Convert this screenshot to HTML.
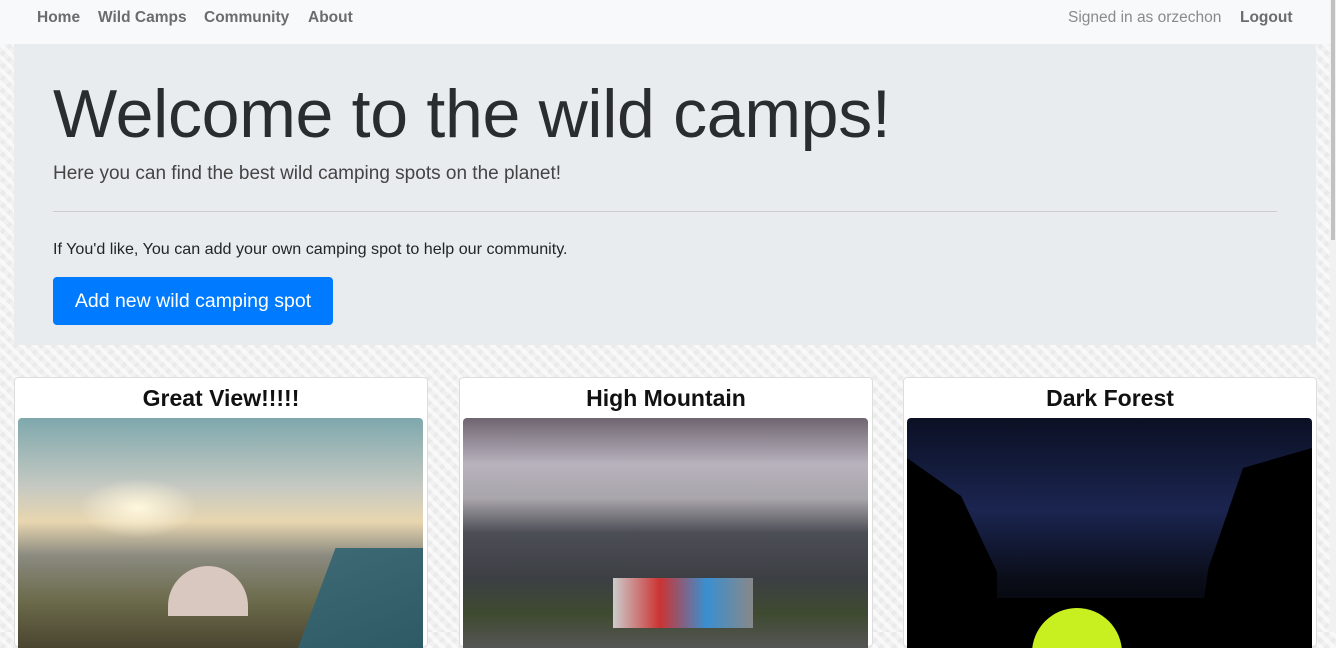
<!DOCTYPE html>
<html><head><style>
*{box-sizing:border-box;margin:0;padding:0}
body{width:1336px;height:632px;overflow:hidden;font-family:"Liberation Sans",sans-serif;background:#f1f1f1;
background-image:repeating-linear-gradient(45deg,rgba(255,255,255,.6) 0 4px,transparent 4px 9px),repeating-linear-gradient(-45deg,rgba(230,230,230,.6) 0 4px,transparent 4px 9px);position:relative}
.nav{position:absolute;left:0;top:0;width:1330px;height:44px;background:#f8f9fa}
.nav a{position:absolute;top:9px;font-size:15.5px;font-weight:bold;color:#6c6c6c;text-decoration:none}
.nav span{position:absolute;top:9px;font-size:15.5px;color:#8a8a8a}
.sb{position:absolute;right:0;top:0;width:6px;height:632px;background:#f1f1f1}
.sb div{position:absolute;left:1px;top:0;width:4px;height:240px;background:#c1c1c1}
.jumbo{position:absolute;left:14px;top:44px;width:1302px;height:301px;background:#e9ecef}
h1{position:absolute;left:39px;top:31px;font-size:68px;font-weight:normal;color:#2a2d30;letter-spacing:-0.3px}
.lead{position:absolute;left:39px;top:119px;font-size:19px;color:#444}
hr{position:absolute;left:39px;top:167px;width:1224px;border:0;border-top:1px solid #ccc}
.p{position:absolute;left:39px;top:196px;font-size:16.1px;color:#212529}
.btn{position:absolute;left:39px;top:233px;width:280px;height:48px;background:#007bff;color:#fff;border-radius:4px;font-size:19.5px;line-height:48px;text-align:center}
.card{position:absolute;top:377px;width:414px;height:270px;background:#fff;border:1px solid #ddd;border-radius:4px}
.card h3{text-align:center;font-size:23px;font-weight:bold;color:#111;margin-top:7px}
.img{position:absolute;left:3px;top:40px;width:405px;height:230px;border-radius:4px 4px 0 0;overflow:hidden}
</style></head><body>
<div class="nav">
<a style="left:37px">Home</a><a style="left:98px">Wild Camps</a><a style="left:204px">Community</a><a style="left:308px">About</a>
<span style="left:1068px">Signed in as orzechon</span><a style="left:1240px">Logout</a>
</div>
<div class="sb"><div></div></div>
<div class="jumbo">
<h1>Welcome to the wild camps!</h1>
<div class="lead">Here you can find the best wild camping spots on the planet!</div>
<hr>
<div class="p">If You'd like, You can add your own camping spot to help our community.</div>
<div class="btn">Add new wild camping spot</div>
</div>
<div class="card" style="left:14px"><h3>Great View!!!!!</h3>
<div class="img" style="background:linear-gradient(180deg,#7ea8ad 0%,#c6c9c2 30%,#e8d6b0 45%,#8a8a80 60%,#6b6a4a 80%,#4a4530 100%)">
<div style="position:absolute;left:60px;top:60px;width:120px;height:60px;background:radial-gradient(#fff7de,transparent 70%)"></div>
<div style="position:absolute;left:280px;top:130px;width:125px;height:100px;background:linear-gradient(160deg,#3e6a76,#2e5a66);clip-path:polygon(30% 0,100% 0,100% 100%,0 100%)"></div>
<div style="position:absolute;left:150px;top:148px;width:80px;height:50px;background:#d8c8c0;border-radius:40px 40px 0 0"></div>
</div></div>
<div class="card" style="left:459px"><h3>High Mountain</h3>
<div class="img" style="background:linear-gradient(180deg,#6f6570 0%,#b8b2bd 20%,#a8a5ab 35%,#4c4e55 50%,#3c3f44 70%,#3e4a30 85%,#555 100%)">
<div style="position:absolute;left:150px;top:160px;width:140px;height:50px;background:linear-gradient(90deg,#ccc,#c33,#3a8fd0,#888)"></div>
</div></div>
<div class="card" style="left:903px"><h3>Dark Forest</h3>
<div class="img" style="background:linear-gradient(180deg,#0b1024 0%,#1b2550 40%,#0a0d18 70%,#000 100%)">
<div style="position:absolute;left:0;top:40px;width:90px;height:190px;background:#000;clip-path:polygon(0 0,60% 20%,100% 60%,100% 100%,0 100%)"></div>
<div style="position:absolute;left:290px;top:30px;width:115px;height:200px;background:#000;clip-path:polygon(40% 10%,100% 0,100% 100%,0 100%,10% 60%)"></div>
<div style="position:absolute;left:0;top:180px;width:405px;height:50px;background:#000"></div>
<div style="position:absolute;left:125px;top:190px;width:90px;height:60px;background:#c8f020;border-radius:45px 45px 0 0"></div>
</div></div>
</body></html>
